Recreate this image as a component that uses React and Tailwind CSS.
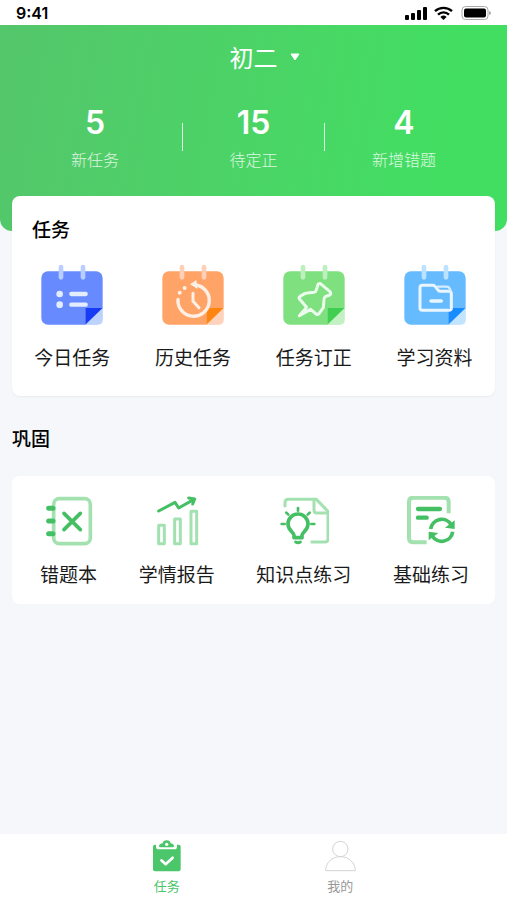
import React, { useState } from "react";

const CalendarIcon = ({ body, tab, fold, corner, children }) => (
  <svg viewBox="0 0 192 186" className="w-16 h-[62px]" fill="none">
    <rect x="4" y="22" width="184" height="160" rx="20" fill={body} />
    <path d="M136 132H188V182H136Z" fill="#fff" />
    <path d="M188 132V168Q188 182 174 182H136Z" fill={corner} />
    <path d="M188 132H136V182Z" fill={fold} />
    <rect x="56" y="2" width="14" height="45" rx="7" fill={tab} />
    <rect x="122" y="2" width="14" height="45" rx="7" fill={tab} />
    {children}
  </svg>
);

const TodayIcon = () => (
  <CalendarIcon body="#678bff" tab="#b9ceff" fold="#163cf5" corner="#bcd2ff">
    <circle cx="59" cy="90" r="10" fill="#e4ecff" />
    <circle cx="59" cy="122" r="10" fill="#e4ecff" />
    <path
      d="M94 90H137M94 122H137"
      stroke="#e4ecff"
      strokeWidth="13"
      strokeLinecap="round"
    />
  </CalendarIcon>
);

const HistoryIcon = () => (
  <CalendarIcon body="#ffa366" tab="#ffd0b8" fold="#ff8412" corner="#ffd2bb">
    <path
      d="M51 106A47 47 0 1 0 104 63"
      stroke="#fff0e6"
      strokeWidth="10"
      strokeLinecap="round"
    />
    <path d="M87 61L106 48L110 75Z" fill="#fff0e6" />
    <circle cx="56" cy="86" r="6" fill="#fff0e6" />
    <circle cx="71" cy="72" r="6" fill="#fff0e6" />
    <path
      d="M96 88V112L114 131"
      stroke="#fff0e6"
      strokeWidth="9"
      strokeLinecap="round"
      strokeLinejoin="round"
    />
  </CalendarIcon>
);

const PinIcon = () => (
  <CalendarIcon body="#7fe07f" tab="#bdf0bd" fold="#40cf50" corner="#c3f1c3">
    <path
      d="M108 61Q113 56 118 61L144 83Q149 89 143 93L130 98Q126 101 126 107L124 131L111 149Q106 154 101 149L86 136L52 155L74 130L53 106Q49 101 54 97L68 89Q71 87 76 87L96 85Q101 84 103 78Z"
      stroke="#ecfcec"
      strokeWidth="9"
      strokeLinejoin="round"
    />
  </CalendarIcon>
);

const FolderIcon = () => (
  <CalendarIcon body="#66bbff" tab="#bce2ff" fold="#168cff" corner="#c2e4ff">
    <path
      d="M58 64H90Q94 64 97 68L105 78Q108 82 113 82H138Q145 82 145 89V132Q145 139 138 139H58Q51 139 51 132V71Q51 64 58 64Z"
      stroke="#eaf6ff"
      strokeWidth="9"
      strokeLinejoin="round"
    />
    <path
      d="M105 68H130Q141 68 143 82"
      stroke="#d5edff"
      strokeWidth="7"
      strokeLinecap="round"
    />
    <path
      d="M84 111H115"
      stroke="#eaf6ff"
      strokeWidth="10"
      strokeLinecap="round"
    />
  </CalendarIcon>
);

const LineIcon = ({ children }) => (
  <svg
    viewBox="0 0 150 150"
    className="w-[50px] h-[50px]"
    fill="none"
    strokeLinecap="round"
    strokeLinejoin="round"
  >
    {children}
  </svg>
);

const MistakesIcon = () => (
  <LineIcon>
    <rect x="29" y="8" width="110" height="135" rx="17" stroke="#a3e2b0" strokeWidth="11" />
    <path d="M14 37H27M14 75H27M14 113H27" stroke="#45bf63" strokeWidth="15" />
    <path d="M60 52L109 101M109 52L60 101" stroke="#45bf63" strokeWidth="11" />
  </LineIcon>
);

const ReportIcon = () => (
  <LineIcon>
    <path
      d="M20 88H37V143H20ZM68 69H85V143H68ZM117 46H134V143H117Z"
      stroke="#a3e2b0"
      strokeWidth="9"
    />
    <path d="M20 45L69 19L80 36L126 10" stroke="#45bf63" strokeWidth="9" />
    <path d="M110 6L128 9L122 24" stroke="#45bf63" strokeWidth="9" />
  </LineIcon>
);

const KnowledgeIcon = () => (
  <LineIcon>
    <path
      d="M18 34V20Q18 10 28 10H112L147 46V129Q147 138 138 138H95"
      stroke="#a3e2b0"
      strokeWidth="9"
      strokeLinecap="butt"
    />
    <path d="M105 12V43Q105 51 113 51H146" stroke="#a3e2b0" strokeWidth="9" />
    <path
      d="M45 125V118C45 108 27 104 27 84A30 30 0 0 1 87 84C87 104 69 108 69 118V125Z"
      stroke="#45bf63"
      strokeWidth="11"
    />
    <path d="M50 138Q57 142 64 138" stroke="#45bf63" strokeWidth="9" />
    <path
      d="M57 36V44M8 84H17M97 84H106M22 50L28 56M92 50L86 56"
      stroke="#45bf63"
      strokeWidth="8"
    />
  </LineIcon>
);

const BasicIcon = () => (
  <LineIcon>
    <path
      d="M62 139H22Q9 139 9 126V18Q9 5 22 5H115Q128 5 128 18V52"
      stroke="#a3e2b0"
      strokeWidth="12"
      strokeLinecap="butt"
    />
    <path d="M36 39H102M36 65H62" stroke="#45bf63" strokeWidth="13" />
    <path
      d="M74 99A33 33 0 0 1 135 86M140 107A33 33 0 0 1 79 120"
      stroke="#45bf63"
      strokeWidth="11"
      strokeLinecap="butt"
    />
    <path d="M146 73V99L117 95ZM68 133V107L97 111Z" fill="#45bf63" />
  </LineIcon>
);

const ClipboardIcon = () => (
  <svg viewBox="0 0 84 96" className="w-7 h-8" fill="none">
    <path
      d="M6 14H9V20Q9 28 17 28H64Q72 28 72 20V14H77Q83 14 83 20V88Q83 94 77 94H6Q0 94 0 88V20Q0 14 6 14Z"
      fill="#4bc66a"
    />
    <path
      d="M41 1C48 1 52 5 53 10C59 11 63 14 63 19Q63 22 59 22H22Q18 22 18 19C18 14 23 11 29 10C30 5 34 1 41 1Z"
      fill="#4bc66a"
    />
    <circle cx="41" cy="13" r="5" fill="#fff" />
    <path
      d="M25 61L38 73L59 53"
      stroke="#fff"
      strokeWidth="8"
      strokeLinecap="round"
      strokeLinejoin="round"
    />
  </svg>
);

const UserIcon = () => (
  <svg viewBox="0 0 93 96" className="w-[31px] h-8" fill="none">
    <g stroke="#d4d4d4" strokeWidth="3" strokeLinejoin="round">
      <circle cx="46" cy="27" r="23" />
      <path d="M2 92C2 68 21 50 46 50S91 68 91 92Z" />
    </g>
  </svg>
);

const StatusBar = () => (
  <div className="h-[25px] px-4 flex items-center justify-between bg-white">
    <span className="font-[Inter] text-base font-semibold text-black">9:41</span>
    <svg viewBox="0 0 86 16" className="w-[86px] h-4" fill="#000">
      <rect x="0" y="10" width="4" height="5" rx="1" />
      <rect x="6" y="8" width="4" height="7" rx="1" />
      <rect x="12" y="5" width="4" height="10" rx="1" />
      <rect x="18" y="2" width="4" height="13" rx="1" />
      <g fill="none" stroke="#000" strokeWidth="2.4">
        <path d="M30 6.2A12.5 12.5 0 0 1 47 6.2" />
        <path d="M33 9.6A8 8 0 0 1 44 9.6" />
      </g>
      <path d="M38.5 15L35.4 12A4.5 4.5 0 0 1 41.6 12Z" />
      <rect x="57" y="1.5" width="26" height="13" rx="3.5" fill="none" stroke="#aaa" />
      <rect x="59" y="3.5" width="22" height="9" rx="2" />
      <path d="M84 6V10Q86 9.5 86 8T84 6Z" fill="#aaa" />
    </svg>
  </div>
);

const tasks = [
  { label: "今日任务", Icon: TodayIcon },
  { label: "历史任务", Icon: HistoryIcon },
  { label: "任务订正", Icon: PinIcon },
  { label: "学习资料", Icon: FolderIcon },
];

const practices = [
  { label: "错题本", Icon: MistakesIcon },
  { label: "学情报告", Icon: ReportIcon },
  { label: "知识点练习", Icon: KnowledgeIcon },
  { label: "基础练习", Icon: BasicIcon },
];

const Stat = ({ value, label, className }) => (
  <div className={`flex flex-col items-center gap-1 ${className || ""}`}>
    <span className="font-[Inter] text-[32px] leading-10 font-semibold">{value}</span>
    <span className="text-base leading-6 font-light text-white/80">{label}</span>
  </div>
);

const App = () => {
  const [grade, setGrade] = useState("初二");

  return (
    <div className="min-h-screen flex flex-col bg-[#f5f7fb] font-['Noto_Sans_CJK_SC',sans-serif]">
      <StatusBar />

      <header className="pt-4 pb-15 rounded-b-xl bg-linear-100 from-[#54c66b] to-[#42de62] to-85% text-white">
        <div className="flex justify-center h-8">
          <div className="relative">
            <select
              aria-label="年级"
              className="block appearance-none field-sizing-content bg-transparent text-2xl leading-8 cursor-pointer"
              value={grade}
              onChange={(e) => setGrade(e.target.value)}
            >
              <option value="初二">初二</option>
            </select>
            <svg
              viewBox="0 0 10 8"
              className="absolute left-full top-3 ml-3 w-2.5 h-2 pointer-events-none"
              fill="#fff"
            >
              <path d="M1 1H9L5 7Z" stroke="#fff" strokeLinejoin="round" />
            </svg>
          </div>
        </div>
        <div className="mt-[30px] pl-[55px] pr-[71px] flex items-center justify-between">
          <Stat value={5} label="新任务" className="w-20" />
          <div className="w-px h-7 bg-white/80"></div>
          <Stat value={15} label="待定正" />
          <div className="w-px h-7 bg-white/80"></div>
          <Stat value={4} label="新增错题" />
        </div>
      </header>

      <main className="flex-1 px-3 -mt-[35px]">
        <section className="bg-white rounded-lg pt-5 pb-[25px] shadow-xs">
          <h2 className="px-5 text-[19px] leading-[26px] font-medium text-black">任务</h2>
          <div className="mt-[22px] grid grid-cols-4">
            {tasks.map(({ label, Icon }) => (
              <a key={label} href="#" className="flex flex-col items-center gap-[17px]">
                <Icon />
                <span className="text-[19px] leading-7 text-[#1a1a1a]">{label}</span>
              </a>
            ))}
          </div>
        </section>

        <h2 className="mt-[29px] text-[19px] leading-[26px] font-medium text-black">巩固</h2>
        <section className="mt-[25px] bg-white rounded-lg pl-7 pr-6.5 pt-5 pb-4 flex justify-between">
          {practices.map(({ label, Icon }) => (
            <a key={label} href="#" className="flex flex-col items-center gap-3.5">
              <Icon />
              <span className="text-[19px] leading-7 text-[#1a1a1a]">{label}</span>
            </a>
          ))}
        </section>
      </main>

      <nav className="bg-white px-20 pt-1.5 pb-1 grid grid-cols-2">
        <a href="#" className="flex flex-col items-center gap-1 text-[13px] leading-5 text-[#4bc66a]">
          <ClipboardIcon />
          任务
        </a>
        <a href="#" className="flex flex-col items-center gap-1 text-[13px] leading-5 text-[#999]">
          <UserIcon />
          我的
        </a>
      </nav>
    </div>
  );
};

export default App;
